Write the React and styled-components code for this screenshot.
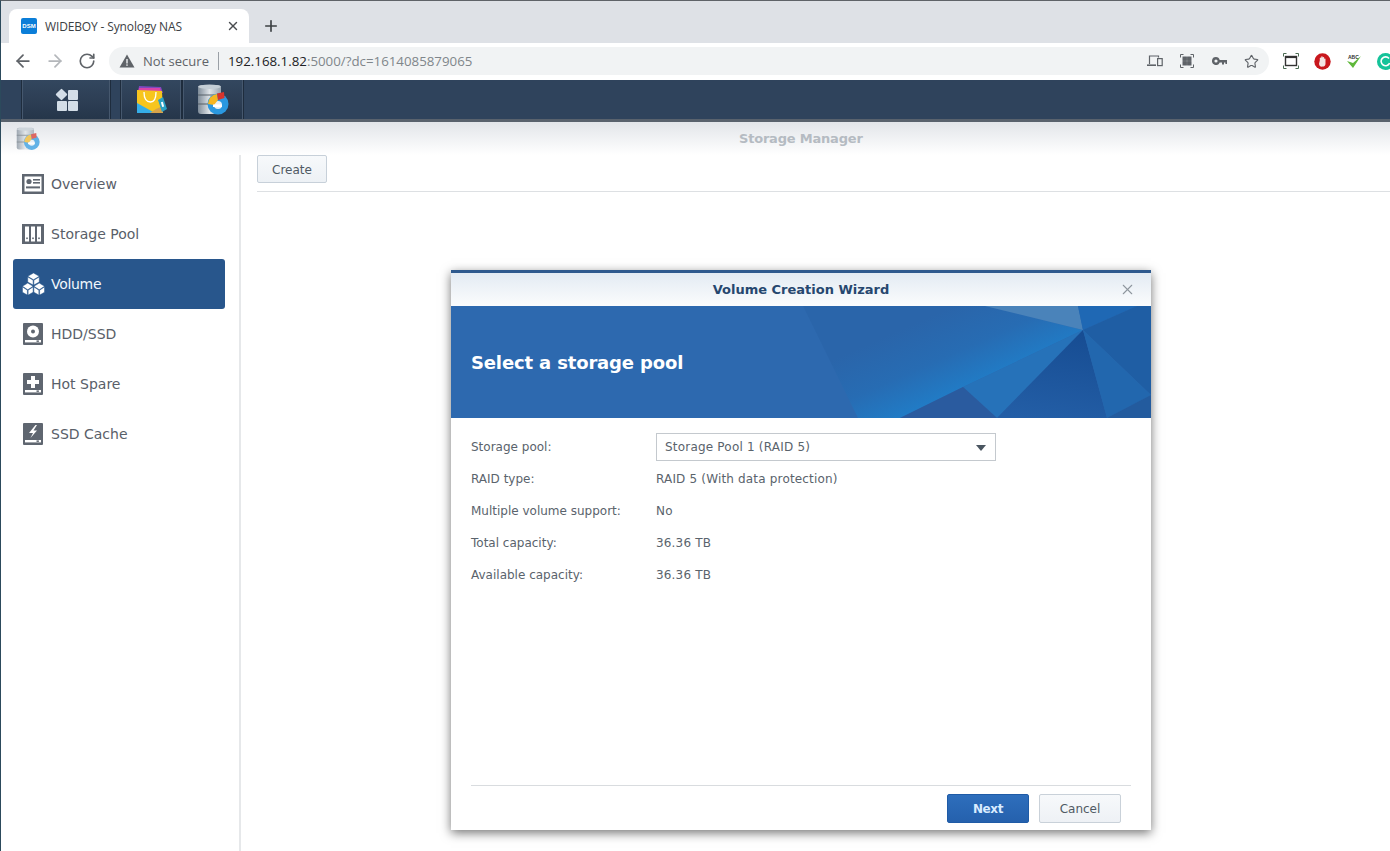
import React from "react";
import styled, { createGlobalStyle } from "styled-components";
import { ArrowLeft, ArrowRight, RotateCw, X, Plus, Star } from "lucide-react";

const Global = createGlobalStyle`
  html, body { margin: 0; padding: 0; background: #fff; }
  #root { width: 1390px; height: 851px; overflow: hidden; }
  * { box-sizing: border-box; }
`;

const Page = styled.div`
  position: relative;
  width: 1390px;
  height: 851px;
  overflow: hidden;
  display: flex;
  flex-direction: column;
  border-left: 1px solid #2c4a5c;
  border-top: 1px solid #5f6368;
  background: #fff;
  font-family: "DejaVu Sans", Verdana, sans-serif;
`;

const TabStrip = styled.div`
  height: 42px;
  flex: none;
  background: #dee1e6;
  display: flex;
  align-items: flex-end;
  padding-left: 8px;
`;

const Tab = styled.div`
  width: 240px;
  height: 34px;
  background: #fff;
  border-radius: 8px 8px 0 0;
  display: flex;
  align-items: center;
  padding: 0 9px 0 12px;
  font: 12px "Open Sans", sans-serif;
  letter-spacing: -0.14px;
  color: #3c4043;
`;

const Favicon = styled.div`
  width: 16px;
  height: 16px;
  border-radius: 2px;
  background: #0b7ed8;
  color: #fff;
  font: bold 6px/16px "Liberation Sans", sans-serif;
  letter-spacing: 0;
  text-align: center;
  margin-right: 8px;
  flex: none;
`;

const TabTitle = styled.span`
  flex: 1;
`;

const NewTab = styled.div`
  margin: 0 0 8px 13px;
  width: 18px;
  height: 18px;
  color: #3c4043;
  display: flex;
`;

const Toolbar = styled.div`
  height: 37px;
  flex: none;
  background: #fff;
  display: flex;
  align-items: center;
  padding: 0 0 1px 12px;
  color: #5f6368;
`;

const NavButton = styled.div`
  width: 32px;
  flex: none;
  display: flex;
  justify-content: flex-start;
  color: ${(p) => (p.$off ? "#b4b7bb" : "#5f6368")};
`;

const Omnibox = styled.div`
  width: 1160px;
  height: 28px;
  flex: none;
  border-radius: 14px;
  background: #f1f3f4;
  display: flex;
  align-items: center;
  padding: 0 2px 0 10px;
  font: 13px "Open Sans", sans-serif;
`;

const Warn = styled.svg`
  flex: none;
  margin-right: 8px;
`;

const NotSecure = styled.span`
  color: #5f6368;
  font-size: 13px;
  width: 76px;
  height: 18px;
  line-height: 18px;
  border-right: 1px solid #9aa0a6;
`;

const Url = styled.span`
  margin-left: 9px;
  color: #80868b;
  flex: 1;
  font-size: 13.3px;
  b {
    font-weight: 400;
    color: #202124;
  }
`;

const OmniIcon = styled.div`
  width: 32px;
  flex: none;
  display: flex;
  justify-content: center;
  color: #5f6368;
`;

const Extensions = styled.div`
  display: flex;
  align-items: center;
  margin-left: 6px;
`;

const Ext = styled.div`
  width: 31.6px;
  flex: none;
  display: flex;
  justify-content: center;
`;

const Taskbar = styled.div`
  height: 42px;
  flex: none;
  background: #2f435c;
  border-bottom: 3px solid #59626d;
  display: flex;
  align-items: stretch;
  padding-left: 21px;
`;

const TaskButton = styled.div`
  width: ${(p) => p.$w}px;
  margin-right: ${(p) => p.$gap || 0}px;
  background: linear-gradient(#33475f, #2c3d53 60%, #25364a);
  border-left: 1px solid #46586e;
  border-right: 1px solid #46586e;
  box-shadow: -1px 0 0 #1e2c3d, 1px 0 0 #1e2c3d;
  display: flex;
  align-items: center;
  justify-content: center;
`;

const AppHeader = styled.div`
  height: 33px;
  flex: none;
  background: linear-gradient(#e2e5e9, #ffffff);
  display: flex;
  align-items: center;
  position: relative;
  padding-left: 15px;
`;

const FadedIcon = styled.div`
  display: flex;
  opacity: 0.72;
`;

const AppTitle = styled.div`
  position: absolute;
  left: 738px;
  top: 9px;
  font: bold 13px "DejaVu Sans", sans-serif;
  letter-spacing: -0.2px;
  color: #b5bbc2;
`;

const AppBody = styled.div`
  flex: 1;
  display: flex;
  min-height: 0;
`;

const Sidebar = styled.nav`
  width: 240px;
  flex: none;
  border-right: 2px solid #e6e8ea;
  padding: 4px 14px 0 12px;
  display: flex;
  flex-direction: column;
`;

const NavItem = styled.div`
  height: 50px;
  border-radius: 3px;
  display: flex;
  align-items: center;
  padding-left: 9px;
  gap: 6px;
  font-size: 14px;
  color: ${(p) => (p.$active ? "#f0f6fc" : "#596069")};
  background: ${(p) => (p.$active ? "#28568c" : "transparent")};
  letter-spacing: ${(p) => (p.$active ? "-0.3px" : "0")};
`;

const IconSlot = styled.div`
  width: 23px;
  flex: none;
  display: flex;
`;

const Content = styled.div`
  flex: 1;
  padding-left: 16px;
`;

const ContentBar = styled.div`
  height: 37px;
  border-bottom: 1px solid #dde0e3;
`;

const ToolButton = styled.div`
  width: 70px;
  height: 28px;
  border: 1px solid #c7d0d9;
  border-radius: 2px;
  background: linear-gradient(#f7f9fb, #edf1f5);
  color: #505a64;
  font-size: 12px;
  line-height: 28px;
  text-align: center;
`;

const Dialog = styled.div`
  position: absolute;
  left: 450px;
  top: 269px;
  width: 700px;
  height: 560px;
  background: #fff;
  border-top: 3px solid #2f5a8e;
  box-shadow: 0 3px 10px rgba(0, 0, 0, 0.55);
  display: flex;
  flex-direction: column;
`;

const DialogHead = styled.div`
  height: 33px;
  flex: none;
  background: linear-gradient(#e3ebf3, #fbfcfd);
  position: relative;
  text-align: center;
  font: bold 13px/33px "DejaVu Sans", sans-serif;
  color: #26476f;
`;

const CloseBtn = styled.div`
  position: absolute;
  right: 15px;
  top: 8px;
  color: #8e969e;
  display: flex;
`;

const Banner = styled.div`
  position: relative;
  height: 112px;
  flex: none;
  background: #2d69af;
  display: flex;
  align-items: center;
  padding-left: 20px;
  color: #fff;
  font: bold 18px "DejaVu Sans", sans-serif;
  letter-spacing: -0.15px;
  overflow: hidden;
`;

const BannerArt = styled.svg`
  position: absolute;
  inset: 0;
`;

const BannerTitle = styled.span`
  position: relative;
`;

const Form = styled.div`
  flex: 1;
  padding: 15px 20px 0;
  display: flex;
  flex-direction: column;
  gap: 4px;
`;

const Row = styled.div`
  height: 28px;
  display: flex;
  align-items: center;
  font-size: 12px;
  color: #5a636c;
`;

const Label = styled.div`
  width: 185px;
  flex: none;
`;

const Value = styled.div`
  letter-spacing: 0.17px;
`;

const Select = styled.div`
  width: 340px;
  height: 28px;
  border: 1px solid #c4c9ce;
  padding: 0 8px;
  display: flex;
  align-items: center;
  justify-content: space-between;
  letter-spacing: 0.2px;
`;

const Caret = styled.span`
  width: 0;
  height: 0;
  border-left: 5.5px solid transparent;
  border-right: 5.5px solid transparent;
  border-top: 6px solid #4a5560;
  margin: 2px 1px 0 0;
`;

const Footer = styled.div`
  margin: 0 20px;
  height: 45px;
  flex: none;
  border-top: 1px solid #d9dcdf;
  display: flex;
  justify-content: flex-end;
  gap: 10px;
  padding: 8px 10px 0 0;
`;

const Btn = styled.div`
  width: 82px;
  height: 29px;
  border-radius: 2px;
  text-align: center;
  font-size: 12px;
  line-height: 28px;
  border: 1px solid ${(p) => (p.$primary ? "#1f5ba6" : "#c9d1d9")};
  background: ${(p) =>
    p.$primary ? "linear-gradient(#2e6ebc, #2561ad)" : "linear-gradient(#f7f9fb, #eef1f5)"};
  color: ${(p) => (p.$primary ? "#d9ecff" : "#505a64")};
  font-weight: ${(p) => (p.$primary ? "bold" : "normal")};
  letter-spacing: ${(p) => (p.$primary ? "-0.4px" : "0")};
`;

const GridIcon = () => (
  <svg width="24" height="24" viewBox="0 0 24 24" style={{ marginLeft: 2 }}>
    <rect x="2.2" y="2.2" width="8.6" height="8.6" rx="1" fill="#d3dde7" transform="rotate(45 6.5 6.5)" />
    <rect x="13" y="2" width="10" height="10" rx="1" fill="#d3dde7" />
    <rect x="2" y="13" width="10" height="10" rx="1" fill="#d3dde7" />
    <rect x="13" y="13" width="10" height="10" rx="1" fill="#d3dde7" />
  </svg>
);

const BagIcon = () => (
  <svg width="32" height="30" viewBox="0 0 32 30" style={{ marginLeft: 2 }}>
    <path d="M3 1 L25 2 L27 8 L2 8 Z" fill="#7d49c0" />
    <path d="M3 3 L24 3 L26 8 L2 8 Z" fill="#d943a8" />
    <path d="M1 5 L26 6 L27 28 L1 28 Z" fill="#f7c51e" />
    <path d="M1 18 L19 28 L1 28 Z" fill="#35aee9" />
    <path d="M14 28 L27 28 L27 21 L20 24 Z" fill="#d6a34a" />
    <path d="M8 7 Q8 17 14.5 17 Q20 17 20 7" fill="none" stroke="#fff" strokeWidth="1.3" />
    <path d="M22 15 L27 12 L31 24 L26 27 Z" fill="#2aa0c4" />
    <rect x="25.4" y="17" width="2" height="5" fill="#fff" transform="rotate(-15 26 19)" />
  </svg>
);

const StorageIcon = ({ size = 32 }) => (
  <svg width={size} height={size} viewBox="0 0 32 32">
    <defs>
      <linearGradient id="cyl" x1="0" x2="1">
        <stop offset="0" stopColor="#7f8c99" />
        <stop offset="0.5" stopColor="#dfe4e8" />
        <stop offset="1" stopColor="#98a4ae" />
      </linearGradient>
    </defs>
    <rect x="1" y="1" width="23" height="29" rx="3" fill="url(#cyl)" />
    <ellipse cx="12.5" cy="2.8" rx="11.5" ry="2.2" fill="#c5ced5" />
    <path d="M1 11h16M1 20h10" stroke="#566069" strokeWidth="1" />
    <circle cx="21" cy="20" r="10.5" fill="#2a98e0" />
    <circle cx="21" cy="21" r="4" fill="#e6eef5" />
    <path d="M20 10 A10 10 0 0 0 11 20 L17 21 L21 16 Z" fill="#f4b622" />
    <path d="M20 9.6 L27 8 L27.5 14 L21 16 Z" fill="#d8342c" />
    <rect x="16" y="20.5" width="9" height="2.5" fill="#fff" />
  </svg>
);

const IC = "#5f6670";
const Overview = () => (
  <svg width="22" height="20" viewBox="0 0 22 20">
    <rect width="22" height="20" fill={IC} />
    <rect x="2.5" y="2.5" width="17" height="15" fill="#fff" />
    <circle cx="7" cy="7.5" r="2.6" fill={IC} />
    <rect x="11" y="5" width="7" height="1.6" fill={IC} />
    <rect x="11" y="8" width="7" height="1.6" fill={IC} />
    <rect x="4" y="12.4" width="14" height="2" fill={IC} />
  </svg>
);
const Pool = () => (
  <svg width="22" height="20" viewBox="0 0 22 20">
    <rect width="22" height="20" fill={IC} />
    <rect x="3" y="2.5" width="4" height="15" fill="#fff" />
    <rect x="9" y="2.5" width="4" height="15" fill="#fff" />
    <rect x="15" y="2.5" width="4" height="15" fill="#fff" />
    <rect x="4.2" y="13.5" width="1.6" height="1.6" fill={IC} />
    <rect x="10.2" y="13.5" width="1.6" height="1.6" fill={IC} />
    <rect x="16.2" y="13.5" width="1.6" height="1.6" fill={IC} />
  </svg>
);
const Cubes = () => (
  <svg width="24" height="24" viewBox="0 0 24 24">
    <g fill="#fff" stroke="#28568c" strokeWidth="0.5">
      <path d="M12 0.5 L18 4 L12 7.5 L6 4 Z" />
      <path d="M6 4.6 L11.6 8 V13 L6 10 Z" />
      <path d="M18 4.6 L12.4 8 V13 L18 10 Z" />
      <path d="M6 11 L11.6 14.4 L6 18 L0.5 14.4 Z" />
      <path d="M0.5 15 L5.6 18.4 V23.6 L0.5 20.6 Z" />
      <path d="M11.6 15 L6.4 18.4 V23.6 L11.6 20.6 Z" />
      <path d="M18 11 L23.5 14.4 L18 18 L12.4 14.4 Z" />
      <path d="M12.4 15 L17.6 18.4 V23.6 L12.4 20.6 Z" />
      <path d="M23.5 15 L18.4 18.4 V23.6 L23.5 20.6 Z" />
    </g>
  </svg>
);
const Drive = ({ children }) => (
  <svg width="20" height="22" viewBox="0 0 20 22" style={{ marginLeft: 1 }}>
    <rect width="20" height="22" rx="1" fill={IC} />
    <rect x="2" y="17" width="16" height="2.4" fill="#fff" />
    <rect x="13.5" y="17.4" width="2.4" height="1.5" fill={IC} />
    {children}
  </svg>
);
const Hdd = () => (
  <Drive>
    <circle cx="10" cy="8.5" r="6" fill="#fff" />
    <circle cx="10" cy="8.5" r="2" fill={IC} />
  </Drive>
);
const Spare = () => (
  <Drive>
    <path d="M8 3h4v4h4v4h-4v4H8v-4H4V7h4z" fill="#fff" />
  </Drive>
);
const Bolt = () => (
  <Drive>
    <path d="M12.5 2 L6 10 H10 L7.5 15 L14 7.5 H10.5 L14 2 Z" fill="#fff" />
  </Drive>
);

const items = [
  ["Overview", Overview],
  ["Storage Pool", Pool],
  ["Volume", Cubes, true],
  ["HDD/SSD", Hdd],
  ["Hot Spare", Spare],
  ["SSD Cache", Bolt],
];

const rows = [
  ["RAID type:", "RAID 5 (With data protection)"],
  ["Multiple volume support:", "No"],
  ["Total capacity:", "36.36 TB"],
  ["Available capacity:", "36.36 TB"],
];

const facets = [
  { p: "352,0 534,0 632,24 512,81 449,112 407,112", f: "url(#fb)" },
  { p: "534,0 627,0 632,24", f: "#4a83ba" },
  { p: "627,0 686,0 632,24", f: "#1f68b4" },
  { p: "686,0 700,0 700,89 632,24", f: "#1f5ea4" },
  { p: "632,24 512,81 546,112", f: "#2672b9" },
  { p: "632,24 546,112 656,112", f: "url(#fc)" },
  { p: "512,81 449,112 546,112", f: "#2a5b9f" },
  { p: "632,24 656,112 700,89", f: "#2267ae" },
  { p: "656,112 700,112 700,89", f: "#235b9e" },
];

export default function App() {
  return (
    <Page>
      <Global />
      <TabStrip>
        <Tab>
          <Favicon>DSM</Favicon>
          <TabTitle>WIDEBOY - Synology NAS</TabTitle>
          <X size={14} strokeWidth={2.4} color="#4a4d50" />
        </Tab>
        <NewTab>
          <Plus size={18} strokeWidth={2.2} />
        </NewTab>
      </TabStrip>
      <Toolbar>
        <NavButton>
          <ArrowLeft size={20} strokeWidth={2.1} />
        </NavButton>
        <NavButton $off>
          <ArrowRight size={20} strokeWidth={2.1} />
        </NavButton>
        <NavButton>
          <RotateCw size={18} strokeWidth={2.2} style={{ marginLeft: 1 }} />
        </NavButton>
        <Omnibox>
          <Warn width="16" height="14" viewBox="0 0 16 14">
            <path d="M8 0.5 L15.5 13.5 H0.5 Z" fill="#5f6368" />
            <rect x="7.3" y="5" width="1.4" height="4.5" fill="#f1f3f4" />
            <rect x="7.3" y="10.4" width="1.4" height="1.4" fill="#f1f3f4" />
          </Warn>
          <NotSecure>Not secure</NotSecure>
          <Url>
            <b>192.168.1.82</b>:5000/?dc=1614085879065
          </Url>
          <OmniIcon>
            <svg width="16" height="12" viewBox="0 0 16 12" fill="none" stroke="#5f6368" strokeWidth="1.2">
              <path d="M2.5 9V1h9v1.5" />
              <path d="M0 10.2h9" strokeWidth="1.6" />
              <rect x="10.6" y="3.6" width="4.6" height="7" />
            </svg>
          </OmniIcon>
          <OmniIcon>
            <svg width="14" height="14" viewBox="0 0 14 14" fill="none" stroke="#5f6368">
              <path d="M0.5 3.5v-3h3M10.5 0.5h3v3M13.5 10.5v3h-3M3.5 13.5h-3v-3" />
              <rect x="3" y="3" width="3.4" height="3.4" fill="#5f6368" />
              <rect x="7.6" y="3" width="3.4" height="3.4" fill="#5f6368" />
              <rect x="3" y="7.6" width="3.4" height="3.4" fill="#5f6368" />
              <rect x="7.6" y="7.6" width="3.4" height="3.4" fill="#5f6368" />
            </svg>
          </OmniIcon>
          <OmniIcon>
            <svg width="15" height="8" viewBox="0 0 15 8" fill="#5f6368">
              <path d="M4 0a4 4 0 1 0 3.7 5.4H10v2h2v-2h1.4v1.6H15V3H7.7A4 4 0 0 0 4 0zm0 2.4a1.6 1.6 0 1 1 0 3.2 1.6 1.6 0 0 1 0-3.2z" />
            </svg>
          </OmniIcon>
          <OmniIcon>
            <Star size={15} strokeWidth={1.8} />
          </OmniIcon>
        </Omnibox>
        <Extensions>
          <Ext>
            <svg width="16" height="16" viewBox="0 0 16 16" fill="none">
              <path d="M0.5 3.5v-3h3M12.5 0.5h3v3M15.5 12.5v3h-3M3.5 15.5h-3v-3" stroke="#4b6b52" />
              <rect x="2.5" y="3.5" width="11" height="9" stroke="#333" strokeWidth="1.4" />
              <rect x="2.5" y="3.5" width="11" height="1.6" fill="#333" />
            </svg>
          </Ext>
          <Ext>
            <svg width="17" height="17" viewBox="0 0 17 17">
              <circle cx="8.5" cy="8.5" r="8.2" fill="#c8171d" />
              <path d="M5.8 7.5V5a.8.8 0 0 1 1.4 0V3.8a.8.8 0 0 1 1.5 0v.6a.8.8 0 0 1 1.5.3v1.2a.7.7 0 0 1 1.3.4v4.2A3 3 0 0 1 8.5 13.6 3.2 3.2 0 0 1 5 10.7z" fill="#f3e4e4" />
            </svg>
          </Ext>
          <Ext>
            <svg width="16" height="16" viewBox="0 0 16 16">
              <text x="2" y="6" fontSize="5" fontWeight="bold" fontFamily="Liberation Sans" fill="#333">ABC</text>
              <path d="M1 8 L7 15 L15 3 L7 10 Z" fill="#5fb83a" />
            </svg>
          </Ext>
          <Ext>
            <svg width="17" height="17" viewBox="0 0 17 17" style={{ flex: "none" }}>
              <circle cx="8.5" cy="8.5" r="8.5" fill="#15c39a" />
              <path d="M12 5.6A4.4 4.4 0 1 0 12.6 10" fill="none" stroke="#fff" strokeWidth="1.6" />
            </svg>
          </Ext>
        </Extensions>
      </Toolbar>
      <Taskbar>
        <TaskButton $w={88} $gap={11}>
          <GridIcon />
        </TaskButton>
        <TaskButton $w={60} $gap={2}>
          <BagIcon />
        </TaskButton>
        <TaskButton $w={60}>
          <StorageIcon />
        </TaskButton>
      </Taskbar>
      <AppHeader>
        <FadedIcon>
          <StorageIcon size={24} />
        </FadedIcon>
        <AppTitle>Storage Manager</AppTitle>
      </AppHeader>
      <AppBody>
        <Sidebar>
          {items.map(([name, Icon, active]) => (
            <NavItem key={name} $active={active}>
              <IconSlot>
                <Icon />
              </IconSlot>
              {name}
            </NavItem>
          ))}
        </Sidebar>
        <Content>
          <ContentBar>
            <ToolButton>Create</ToolButton>
          </ContentBar>
        </Content>
      </AppBody>
      <Dialog>
        <DialogHead>
          Volume Creation Wizard
          <CloseBtn>
            <X size={17} strokeWidth={1.5} />
          </CloseBtn>
        </DialogHead>
        <Banner>
          <BannerArt width="700" height="112" viewBox="0 0 700 112">
            <defs>
              <linearGradient id="fb" gradientUnits="userSpaceOnUse" x1="480" y1="10" x2="512" y2="82">
                <stop offset="0" stopColor="#2a65aa" />
                <stop offset="0.55" stopColor="#276cb3" />
                <stop offset="1" stopColor="#217bc5" />
              </linearGradient>
              <linearGradient id="fc" x1="0.5" y1="0" x2="0.3" y2="1">
                <stop offset="0" stopColor="#174d93" />
                <stop offset="1" stopColor="#235ea6" />
              </linearGradient>
            </defs>
            {facets.map((f) => (
              <polygon key={f.p} points={f.p} fill={f.f} />
            ))}
          </BannerArt>
          <BannerTitle>Select a storage pool</BannerTitle>
        </Banner>
        <Form>
          <Row>
            <Label>Storage pool:</Label>
            <Select>
              Storage Pool 1 (RAID 5)
              <Caret />
            </Select>
          </Row>
          {rows.map(([l, v]) => (
            <Row key={l}>
              <Label>{l}</Label>
              <Value>{v}</Value>
            </Row>
          ))}
        </Form>
        <Footer>
          <Btn $primary>Next</Btn>
          <Btn>Cancel</Btn>
        </Footer>
      </Dialog>
    </Page>
  );
}
